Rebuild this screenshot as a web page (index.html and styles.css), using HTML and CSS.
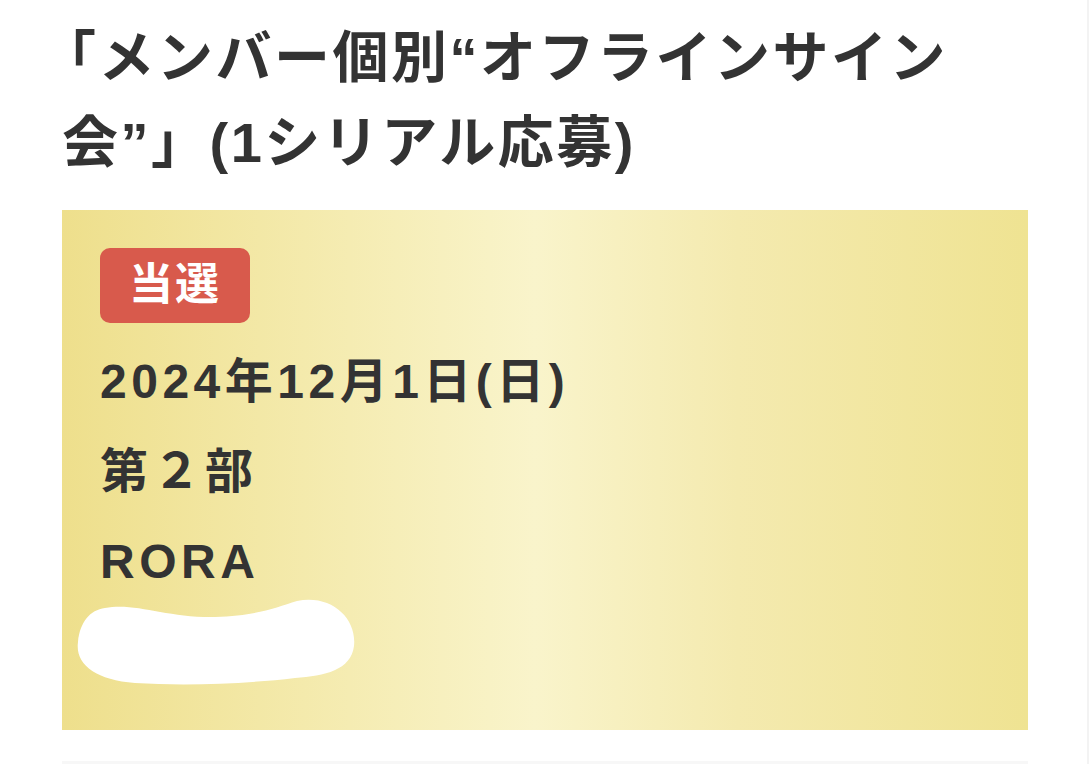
FILE: index.html
```html
<!DOCTYPE html>
<html lang="ja">
<head>
    <meta charset="UTF-8">
    <meta name="viewport" content="width=device-width, initial-scale=1.0">
    <title>応募結果</title>
    <link rel="stylesheet" href="styles.css">
</head>
<body>
    <div class="page">
        <h1 class="entry-title">「メンバー個別“オフラインサイン会”」(1シリアル応募)</h1>

        <div class="result-card">
            <span class="result-badge">当選</span>
            <p class="result-line date">2024年12月1日(日)</p>
            <p class="result-line">第２部</p>
            <p class="result-line">RORA</p>
            <!-- hidden serial -->
            <svg class="masked" width="280" height="90" viewBox="0 0 280 90">
                <path d="M30 10 C60 4 92 20 140 19 C180 18 200 10 222 3 C256 -4 282 20 279 48 C276 72 250 78 220 80 C170 86 110 88 60 85 C20 82 0 66 3 44 C5 24 15 12 30 10 Z" fill="#fff"/>
            </svg>
        </div>

        <div class="next-card"></div>
    </div>
</body>
</html>
```

FILE: styles.css
```css
* {
    margin: 0;
    padding: 0;
    box-sizing: border-box;
}

body {
    background-color: #fff;
    font-family: "Liberation Sans", "Noto Sans CJK JP", sans-serif;
    color: #333;
    border-right: 2px solid #f3f3f3;
    height: 764px;
    overflow: hidden;
}

.page {
    padding: 15px 59px 0 62px;
}

.entry-title {
    font-size: 56px;
    font-weight: 700;
    line-height: 85px;
    letter-spacing: 2.5px;
    text-indent: -22px;
    margin-bottom: 25px;
}

.result-card {
    height: 520px;
    padding: 38px 38px 0;
    background: linear-gradient(90deg, #eedf8c 0%, #f4eaac 25%, #f9f4cb 49%, #f4eaaf 70%, #efe392 100%);
}

.result-badge {
    display: inline-block;
    height: 75px;
    line-height: 73px;
    padding: 0 29px;
    border-radius: 10px;
    background-color: #d85a4c;
    color: #fff;
    font-size: 44px;
    font-weight: 700;
    letter-spacing: 2px;
}

.result-line {
    font-size: 48px;
    font-weight: 700;
    line-height: 90px;
    letter-spacing: 4.5px;
}

.date {
    margin-top: 14px;
}

.masked {
    display: block;
    margin: -9px 0 0 -25px;
}

.next-card {
    height: 30px;
    margin-top: 31px;
    background-color: #f7f7f7;
}
```
